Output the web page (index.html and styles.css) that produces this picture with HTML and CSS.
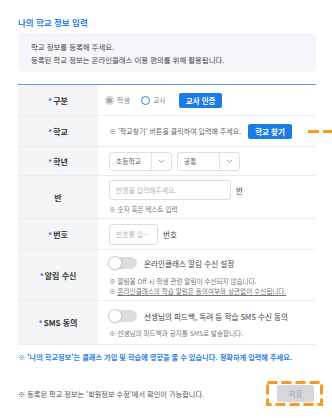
FILE: index.html
```html
<!DOCTYPE html>
<html lang="ko">
<head>
<meta charset="utf-8">
<link rel="stylesheet" href="styles.css">
</head>
<body>
<div class="page">
  <h2 class="title">나의 학교 정보 입력</h2>
  <div class="intro">
    <p>학교 정보를 등록해 주세요.</p>
    <p>등록된 학교 정보는 온라인클래스 이용 편의를 위해 활용됩니다.</p>
  </div>

  <div class="form">
    <div class="row r1">
      <div class="label"><span class="req">*</span>구분</div>
      <div class="field">
        <label class="radio"><span class="dot checked"></span>학생</label>
        <label class="radio"><span class="dot"></span>교사</label>
        <button class="btn">교사 인증</button>
      </div>
    </div>
    <div class="row r2">
      <div class="label"><span class="req">*</span>학교</div>
      <div class="field">
        <span class="hint">※ '학교찾기' 버튼을 클릭하여 입력해 주세요.</span>
        <button class="btn">학교 찾기</button>
      </div>
      <span class="mark-line"></span>
    </div>
    <div class="row r3">
      <div class="label"><span class="req">*</span>학년</div>
      <div class="field">
        <div class="select s-school"><span class="sv">초등학교</span><span class="chev"><svg width="7" height="5" viewBox="0 0 7 5"><path d="M1 1l2.5 2.5L6 1" fill="none" stroke="#999" stroke-width="0.9"/></svg></span></div>
        <div class="select s-grade"><span class="sv">공통</span><span class="chev"><svg width="7" height="5" viewBox="0 0 7 5"><path d="M1 1l2.5 2.5L6 1" fill="none" stroke="#999" stroke-width="0.9"/></svg></span></div>
      </div>
    </div>
    <div class="row r4">
      <div class="label">반</div>
      <div class="field col">
        <div class="line"><input class="inp i-class" placeholder="반명을 입력해주세요."><span class="unit">반</span></div>
        <p class="sub">※ 숫자 혹은 텍스트 입력</p>
      </div>
    </div>
    <div class="row r5">
      <div class="label"><span class="req">*</span>번호</div>
      <div class="field">
        <input class="inp i-num" placeholder="번호를 입력해주세요."><span class="unit">번호</span>
      </div>
    </div>
    <div class="row r6">
      <div class="label"><span class="req">*</span>알림 수신</div>
      <div class="field col">
        <div class="line"><span class="toggle"><span class="knob"></span></span><span class="tlabel">온라인클래스 알림 수신 설정</span></div>
        <p class="sub s1">※ 알림을 Off 시 학생 관련 알림이 수신되지 않습니다.</p>
        <p class="sub">※ <u>온라인클래스의 학습 알림은 동의여부와 상관없이 수신됩니다.</u></p>
      </div>
    </div>
    <div class="row r7">
      <div class="label"><span class="req">*</span>SMS 동의</div>
      <div class="field col">
        <div class="line"><span class="toggle"><span class="knob"></span></span><span class="tlabel">선생님의 피드백, 독려 등 학습 SMS 수신 동의</span></div>
        <p class="sub s1">※ 선생님의 피드백과 공지를 SMS로 발송합니다.</p>
      </div>
    </div>
  </div>

  <p class="notice">※ '나의 학교정보'는 클래스 가입 및 학습에 영향을 줄 수 있습니다. 정확하게 입력해 주세요.</p>

  <div class="footer">
    <p class="fnote">※ 등록된 학교 정보는 '회원정보 수정'에서 확인이 가능합니다.</p>
    <div class="save-wrap">
      <button class="save">저장</button>
      <svg class="save-mark" width="57" height="25" viewBox="0 0 57 25"><rect x="1.5" y="1.5" width="54" height="22" fill="none" stroke="#f59a23" stroke-width="3" stroke-dasharray="10 4"/></svg>
    </div>
  </div>
</div>
</body>
</html>
```

FILE: styles.css
```css
* { box-sizing: border-box; margin: 0; padding: 0; }
body {
  margin: 0;
  background: #fff;
  font-family: "Noto Sans CJK KR", "Noto Sans", sans-serif;
  color: #333;
  width: 332px;
  height: 418px;
  overflow: hidden;
}
.page { padding: 16px 16px 0 18px; }
.title {
  font-size: 8.5px;
  font-weight: 700;
  color: #2f7fe6;
  line-height: 13px;
  margin-bottom: 4px;
}
.intro {
  background: #f4f6f9;
  border-radius: 5px;
  padding: 7px 13px 6px;
  font-size: 7.4px;
  line-height: 13px;
  color: #444;
}
.form {
  position: relative;
  margin-top: 12px;
  border-top: 1.5px solid #5b9bec;
}
.row {
  display: flex;
  border-bottom: 1px solid #e9ebee;
  position: relative;
}
.label {
  width: 80px;
  flex: none;
  background: #f4f5f7;
  display: flex;
  align-items: center;
  justify-content: center;
  font-size: 8px;
  font-weight: 700;
  color: #333;
}
.req { color: #2f7fe6; margin-right: 1px; }
.field {
  flex: 1;
  display: flex;
  align-items: center;
  padding: 0 0 0 11px;
  font-size: 7px;
  color: #555;
}
.field.col { flex-direction: column; align-items: flex-start; justify-content: flex-start; }
.line { display: flex; align-items: center; }
.r1 .field { height: 30px; }
.r2 .field { height: 30px; }
.r3 .field { height: 28px; }
.r4 .field { padding-top: 4px; height: 42px; }
.r5 .field { height: 30px; }
.r6 .field { padding-top: 7px; height: 50px; }
.r7 .field { padding-top: 9px; height: 43px; }

.radio { display: flex; align-items: center; color: #888; margin-right: 11px; }
.radio .dot {
  width: 9px; height: 9px; border-radius: 50%;
  border: 1px solid #2f7fe6; background: #fff; margin-right: 3px;
}
.radio .dot.checked {
  border-color: #c5c7ca;
  background: radial-gradient(circle, #a9abae 0 2.6px, #e8e9eb 3px);
}
.radio:first-child { margin-left: -4px; }
.btn {
  background: #1c7be5;
  color: #fff;
  border: none;
  border-radius: 2px;
  font-family: inherit;
  font-size: 7.5px;
  font-weight: 700;
  height: 15px;
  padding: 0 7px;
  line-height: 15px;
}
.r1 .btn { margin-left: 2px; }
.hint { color: #666; margin-right: 7px; }

.select {
  display: flex;
  height: 19px;
  border: 1px solid #dcdee1;
  border-radius: 3px;
  background: #fff;
  margin-right: 5px;
}
.s-school { width: 63px; }
.s-grade { width: 63px; }
.sv { flex: 1; padding-left: 6px; line-height: 17px; font-size: 6.8px; color: #666; }
.chev {
  width: 20px; border-left: 1px solid #e2e4e6;
  display: flex; align-items: center; justify-content: center;
}
.inp {
  height: 20px;
  border: 1px solid #dcdee1;
  border-radius: 3px;
  font-family: inherit;
  font-size: 6.8px;
  padding: 0 6px;
  color: #555;
  outline: none;
  text-overflow: ellipsis;
}
.inp::placeholder { color: #b3b5b9; }
.i-class { width: 122px; }
.i-num { width: 49px; height: 21px; }
.unit { font-size: 7.5px; color: #444; margin-left: 5px; }
.sub { font-size: 6.6px; color: #777; line-height: 10px; margin-top: 4px; }
.toggle {
  width: 28px; height: 12px; border-radius: 6px;
  background: #dcdde0; position: relative; margin-right: 7px; display: inline-block;
}
.knob {
  position: absolute; left: -1px; top: -1px;
  width: 14px; height: 14px; border-radius: 50%;
  background: #fff; border: 1px solid #cfd1d4;
  box-shadow: 0 0.5px 1.5px rgba(0,0,0,.15);
}
.tlabel { font-size: 7.6px; color: #444; }
.r6 .s1 { margin-top: 7px; }
.r6 .sub + .sub { margin-top: 0; }
.r7 .s1 { margin-top: 6px; }
.mark-line {
  position: absolute;
  left: 290px; top: 14px;
  width: 24px; height: 3px;
  background: repeating-linear-gradient(90deg, #f59a23 0 11px, transparent 11px 15px);
}
.notice {
  margin-top: 6px;
  font-size: 7.2px;
  font-weight: 700;
  color: #2f7fe6;
  line-height: 12px;
}
.footer {
  display: flex;
  align-items: center;
  justify-content: space-between;
  margin-top: 22px;
}
.fnote { font-size: 7.2px; color: #555; }
.save-wrap { position: relative; margin-right: 2px; }
.save {
  display: block;
  width: 37px; height: 17px;
  border: none; border-radius: 2px;
  background: #d5d7da; color: #a0a3a7;
  font-family: inherit; font-size: 7.5px;
}
.save-mark { position: absolute; left: -11px; top: -4px; }
```
